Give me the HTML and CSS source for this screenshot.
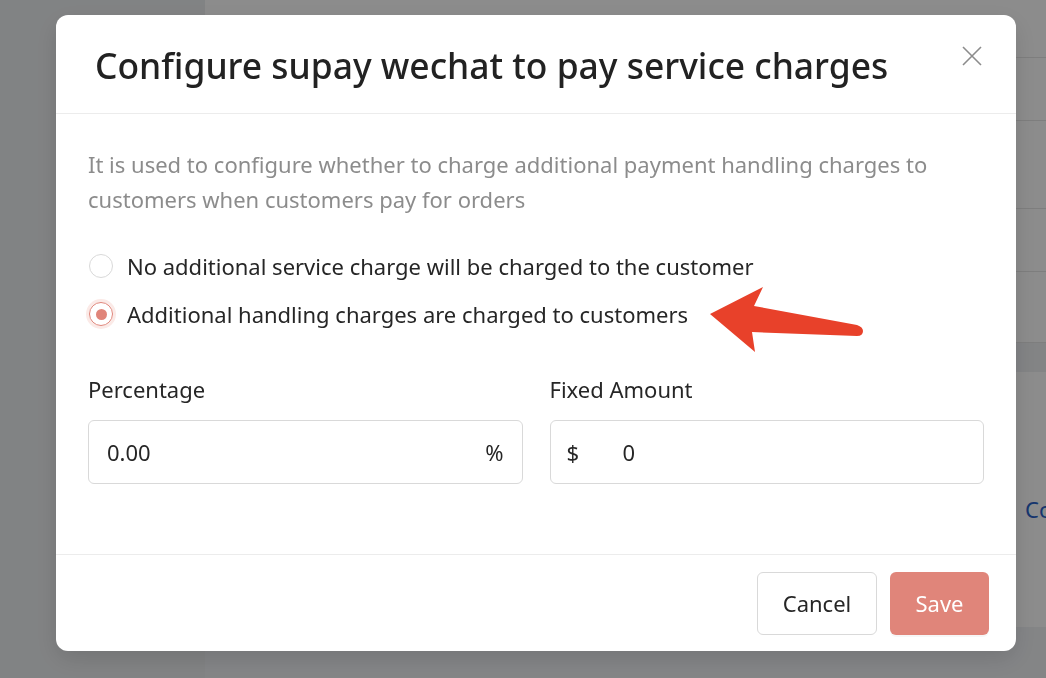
FILE: index.html
```html
<!DOCTYPE html>
<html lang="en">
<head>
    <meta charset="UTF-8">
    <meta name="viewport" content="width=device-width, initial-scale=1.0">
    <title>Payment settings</title>
    <link rel="stylesheet" href="styles.css">
</head>
<body>
    <div class="page">
        <aside class="sidebar"></aside>
        <main class="main">
            <div class="table">
                <div class="row row-top"></div>
                <div class="row row-sm"></div>
                <div class="row row-md"></div>
                <div class="row row-sm"></div>
                <div class="row row-last"></div>
                <div class="table-head"></div>
                <div class="table-body">
                    <a class="link" href="#">Configure</a>
                </div>
            </div>
        </main>
    </div>

    <div class="overlay">
        <div class="modal">
            <div class="modal-header">
                <h2 class="modal-title">Configure supay wechat to pay service charges</h2>
                <button class="close-btn" aria-label="Close">
                    <svg width="20" height="20" viewBox="0 0 20 20">
                        <path d="M1 1 L19 19 M19 1 L1 19" stroke="#8c8c8c" stroke-width="1.6" fill="none"/>
                    </svg>
                </button>
            </div>

            <div class="modal-body">
                <p class="desc">It is used to configure whether to charge additional payment handling charges to customers when customers pay for orders</p>

                <div class="radio-group">
                    <label class="radio">
                        <span class="radio-dot"></span>
                        <span class="radio-text">No additional service charge will be charged to the customer</span>
                    </label>
                    <label class="radio checked">
                        <span class="radio-dot"></span>
                        <span class="radio-text">Additional handling charges are charged to customers</span>
                    </label>
                </div>

                <div class="fields">
                    <div class="field">
                        <div class="field-label">Percentage</div>
                        <div class="input-box">
                            <span class="input-value">0.00</span>
                            <span class="suffix">%</span>
                        </div>
                    </div>
                    <div class="field">
                        <div class="field-label">Fixed Amount</div>
                        <div class="input-box has-prefix">
                            <span class="prefix">$</span>
                            <span class="input-value">0</span>
                        </div>
                    </div>
                </div>
            </div>

            <div class="modal-footer">
                <button class="btn btn-default">Cancel</button>
                <button class="btn btn-primary">Save</button>
            </div>
        </div>
    </div>

    <!-- annotation arrow -->
    <svg class="arrow" width="1046" height="678" viewBox="0 0 1046 678">
        <path d="M710 314 L763 287 L754 306 L857 325 Q863 327 863 331 Q863 336 857 336 L752 332 L755 352 Z" fill="#e8412a"/>
    </svg>
</body>
</html>
```

FILE: styles.css
```css
* {
    margin: 0;
    padding: 0;
    box-sizing: border-box;
}

body {
    font-family: "Noto Sans", "Liberation Sans", sans-serif;
    color: #262626;
    width: 1046px;
    height: 678px;
    overflow: hidden;
}

/* background page */
.page {
    display: flex;
    height: 678px;
    background: #f0f2f5;
}

.sidebar {
    width: 205px;
    flex-shrink: 0;
    background: #eceef0;
}

.main {
    flex: 1;
    min-width: 0;
    display: flex;
    flex-direction: column;
}

.table {
    background: #fff;
    height: 627px;
    display: flex;
    flex-direction: column;
}

.row {
    border-bottom: 1px solid #e6e6e6;
}

.row-top { height: 58px; }
.row-sm { height: 63px; }
.row-md { height: 88px; }
.row-last { height: 71px; }

.table-head {
    height: 29px;
    background: #eef0f3;
}

.table-body {
    flex: 1;
    overflow: hidden;
    white-space: nowrap;
    padding: 122px 0 0 820px;
}

.link {
    color: #2a62c9;
    text-decoration: none;
    font-size: 22px;
}

/* modal */
.overlay {
    position: fixed;
    inset: 0;
    background: rgba(0, 0, 0, 0.45);
    padding: 15px 0 0 56px;
}

.modal {
    width: 960px;
    height: 636px;
    background: #fff;
    border-radius: 12px;
    box-shadow: 0 8px 24px rgba(0, 0, 0, 0.12);
    display: flex;
    flex-direction: column;
}

.modal-header {
    height: 99px;
    border-bottom: 1px solid #ececec;
    display: flex;
    align-items: center;
    justify-content: space-between;
    padding: 0 34px 0 39px;
}

.modal-title {
    font-size: 35.4px;
    font-weight: 500;
    color: #222;
    margin-top: 2px;
    white-space: nowrap;
}

.close-btn {
    background: none;
    border: none;
    margin-top: -16px;
    display: flex;
}

.modal-body {
    flex: 1;
    padding: 33px 32px 0 32px;
}

.desc {
    font-size: 22px;
    line-height: 35px;
    color: #8c8c8c;
}

.radio-group {
    margin-top: 35px;
    display: flex;
    flex-direction: column;
    gap: 20px;
}

.radio {
    display: flex;
    align-items: center;
    gap: 14px;
    font-size: 22px;
    color: #262626;
    height: 28px;
}

.radio-dot {
    width: 24px;
    height: 24px;
    flex-shrink: 0;
    border-radius: 50%;
    border: 1px solid #d9d9d9;
    margin-left: 1px;
    display: flex;
    align-items: center;
    justify-content: center;
}

.radio.checked .radio-dot {
    border-color: #e0857a;
    box-shadow: 0 0 0 3px #fbeae7;
}

.radio.checked .radio-dot::after {
    content: "";
    width: 11px;
    height: 11px;
    border-radius: 50%;
    background: #e0857a;
}

.fields {
    margin-top: 47px;
    display: flex;
    gap: 27px;
}

.field {
    flex: 1;
}

.field-label {
    font-size: 22px;
    color: #262626;
    line-height: 28px;
    margin-bottom: 17px;
}

.input-box {
    height: 64px;
    border: 1px solid #d9d9d9;
    border-radius: 6px;
    display: flex;
    align-items: center;
    padding: 0 18px;
    font-size: 22px;
    color: #262626;
}

.input-box.has-prefix {
    padding-left: 16px;
}

.input-box .input-value {
    flex: 1;
}

.prefix {
    width: 56px;
}

/* footer */
.modal-footer {
    height: 97px;
    border-top: 1px solid #ececec;
    display: flex;
    justify-content: flex-end;
    align-items: center;
    gap: 13px;
    padding: 0 27px 0 0;
}

.btn {
    height: 63px;
    border-radius: 6px;
    font-family: inherit;
    font-size: 22px;
}

.btn-default {
    width: 120px;
    background: #fff;
    border: 1px solid #d9d9d9;
    color: #262626;
}

.btn-primary {
    width: 99px;
    background: #e0857a;
    border: none;
    color: #fff;
    box-shadow: 0 2px 0 rgba(0, 0, 0, 0.03);
}

.arrow {
    position: fixed;
    top: 0;
    left: 0;
    pointer-events: none;
}
```
